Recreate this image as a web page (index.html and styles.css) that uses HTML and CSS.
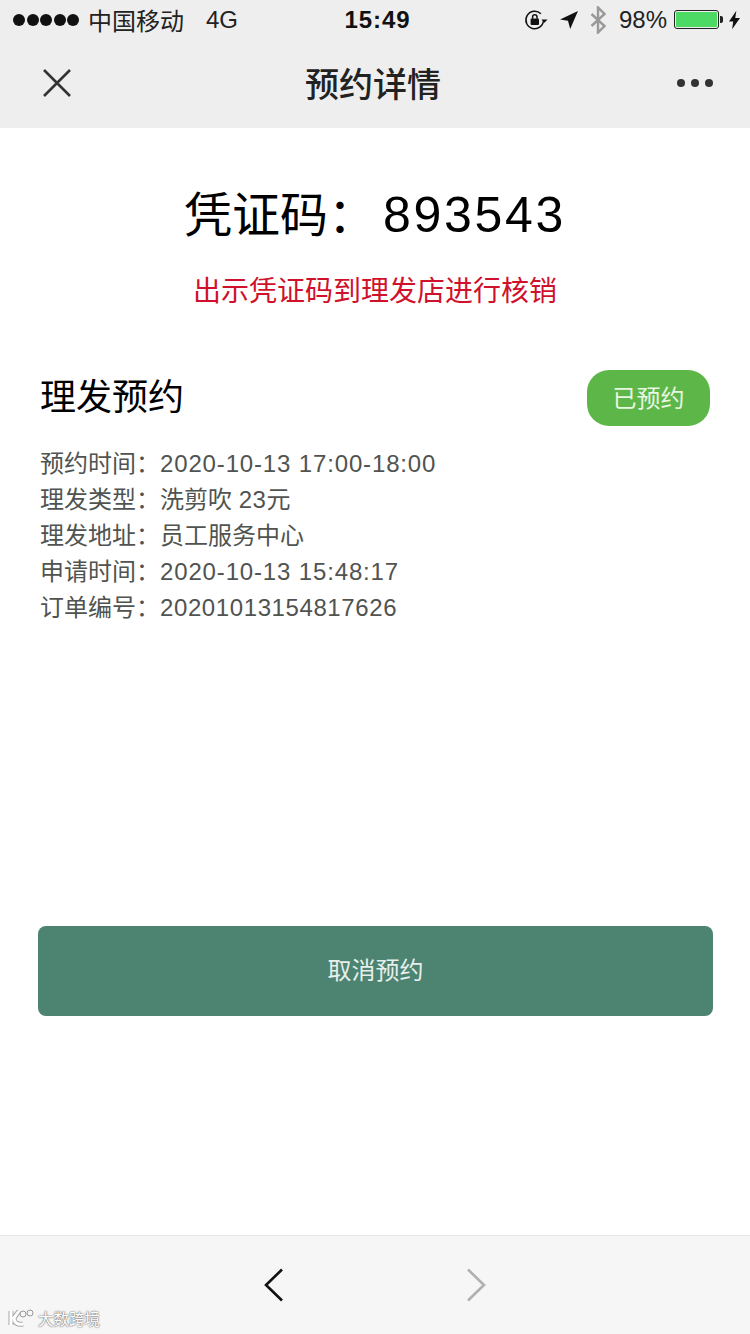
FILE: index.html
```html
<!DOCTYPE html>
<html lang="zh-CN">
  <head>
    <meta charset="utf-8"/>
    <title>预约详情</title>
    <link rel="stylesheet" href="styles.css">
  </head>

  <body>
    <div class="phone">
      <header class="top">
        <div class="status">
          <div class="status-left">
            <span class="signal"><i></i><i></i><i></i><i></i><i></i></span>
            <span class="carrier">中国移动</span>
            <span class="net">4G</span>
          </div>
          <div class="clock">15:49</div>
          <div class="status-right">
            <svg class="ic-lock" width="24" height="24" viewBox="0 0 24 24">
              <path d="M19.500 12a8.800 8.800 0 1 1-2.600-6.300" fill="none" stroke="#111" stroke-width="1.500"/>
              <path d="M17.500 11.500h6l-3 3.200z" fill="#111"/>
              <rect x="6.600" y="10.600" width="8.400" height="6.400" rx="1" fill="#111"/>
              <path d="M8.600 10.800V9a2.200 2.200 0 0 1 4.400 0v1.800" fill="none" stroke="#111" stroke-width="1.500"/>
            </svg>
            <svg class="ic-loc" width="18" height="18" viewBox="0 0 18 18">
              <path d="M18 0 0 8.500l8 1.300L10.200 18z" fill="#111"/>
            </svg>
            <svg class="ic-bt" width="16" height="28" viewBox="0 0 16 28">
              <path d="M1.500 8l13 12-6.500 6.500V1.500L14.500 8l-13 12" fill="none" stroke="#999" stroke-width="2.400"/>
            </svg>
            <span class="percent">98%</span>
            <span class="battery"><span class="battery-fill"></span></span>
            <span class="battery-tip"></span>
            <svg class="ic-bolt" width="11" height="20" viewBox="0 0 12 20">
              <path d="M8 0 0 11.500h4.600L3.400 20 12 7.800H6.800z" fill="#111"/>
            </svg>
          </div>
        </div>
        <div class="nav">
          <svg width="32" height="32" viewBox="0 0 32 32">
            <path d="M3 3l26 26M29 3L3 29" stroke="#333" stroke-width="2.600" fill="none"/>
          </svg>
          <h1 class="nav-title">预约详情</h1>
          <span class="dots"><i></i><i></i><i></i></span>
        </div>
      </header>

      <main class="content">
        <div class="code">凭证码：<span class="code-num">893543</span></div>
        <p class="hint">出示凭证码到理发店进行核销</p>

        <div class="card-head">
          <h2 class="card-title">理发预约</h2>
          <span class="tag">已预约</span>
        </div>
        <ul class="info">
          <li>预约时间：<span class="stamp">2020-10-13 17:00-18:00</span></li>
          <li>理发类型：洗剪吹 <span class="num">23</span>元</li>
          <li>理发地址：员工服务中心</li>
          <li>申请时间：<span class="stamp">2020-10-13 15:48:17</span></li>
          <li>订单编号：<span class="num">20201013154817626</span></li>
        </ul>

        <button class="cancel">取消预约</button>
      </main>

      <footer class="bottom">
        <svg width="20" height="34" viewBox="0 0 20 34">
          <path d="M18 1.500 2 17l16 15.500" fill="none" stroke="#111" stroke-width="2.600"/>
        </svg>
        <svg width="20" height="34" viewBox="0 0 20 34">
          <path d="M2 1.500 18 17 2 32.500" fill="none" stroke="#b0b0b0" stroke-width="2.600"/>
        </svg>
      </footer>

      <div class="mark">
        <svg width="28" height="20" viewBox="0 0 28 20">
          <path d="M4 3v14M12 3 7 10c0 5 4 7 9 6" fill="none" stroke="#a8a8a8" stroke-width="5"/>
          <path d="M4 3v14M12 3 7 10c0 5 4 7 9 6" fill="none" stroke="#fff" stroke-width="3"/>
          <circle cx="16" cy="6" r="3" fill="none" stroke="#999"/>
          <circle cx="23" cy="5" r="3" fill="none" stroke="#999"/>
        </svg>
        <span>大数跨境</span>
      </div>
    </div>
  </body>
</html>
```

FILE: styles.css
```css
* {
  box-sizing: border-box;
}

body {
  margin: 0;
  background: #fff;
  color: #000;
  font-family: "Liberation Sans", "Noto Sans CJK SC", sans-serif;
}

h1, h2, p, ul {
  margin: 0;
  padding: 0;
}

.phone {
  position: relative;
  width: 750px;
  height: 1334px;
  display: flex;
  flex-direction: column;
  overflow: hidden;
}

/* top bars */
.top {
  height: 128px;
  background: #eeeeee;
  flex: none;
}

.status {
  height: 42px;
  padding: 0 10px 3px 13px;
  display: grid;
  grid-template-columns: 1fr auto 1fr;
  align-items: center;
  font-size: 24px;
  color: #222;
}

.status-left {
  display: flex;
  align-items: center;
}

.signal {
  display: flex;
  gap: 1.500px;
  margin-right: 9px;
}

.signal i {
  width: 12px;
  height: 12px;
  border-radius: 50%;
  background: #111;
}

.net {
  margin-left: 22px;
}

.clock {
  margin-left: 2px;
  font-size: 24px;
  font-weight: 700;
  letter-spacing: .9px;
  color: #111;
}

.status-right {
  display: flex;
  align-items: center;
  justify-content: flex-end;
}

.ic-loc {
  margin-left: 12px;
}

.ic-bt {
  margin-left: 12px;
}

.percent {
  margin-left: 13px;
  font-size: 24px;
}

.battery {
  margin-left: 7px;
  width: 45px;
  height: 19px;
  padding: 1px;
  border: 1px solid #222;
  border-radius: 3px;
}

.battery-fill {
  display: block;
  height: 100%;
  background: #4cd964;
  border-radius: 1px;
}

.battery-tip {
  width: 3px;
  height: 7px;
  margin-left: 1px;
  background: #222;
  border-radius: 0 2px 2px 0;
}

.ic-bolt {
  margin-left: 6px;
}

.nav {
  height: 85px;
  padding: 0 37px 4px 41px;
  display: flex;
  align-items: center;
  justify-content: space-between;
}

.nav-title {
  margin-right: 4px;
  font-size: 34px;
  font-weight: 500;
  color: #222;
}

.dots {
  display: flex;
  gap: 6px;
}

.dots i {
  width: 8px;
  height: 8px;
  border-radius: 50%;
  background: #333;
}

/* main */
.content {
  flex: 1;
  padding: 0 40px;
  display: flex;
  flex-direction: column;
}

.code {
  margin-top: 51px;
  height: 72px;
  font-size: 48px;
  line-height: 72px;
  text-align: center;
}

.code-num {
  margin-left: 7px;
  font-size: 50px;
  letter-spacing: 2.700px;
}

.hint {
  margin-top: 21px;
  font-size: 28px;
  line-height: 40px;
  color: #d0112b;
  text-align: center;
}

.card-head {
  margin-top: 58px;
  display: flex;
  align-items: center;
  justify-content: space-between;
}

.card-title {
  font-size: 36px;
  font-weight: 400;
  line-height: 56px;
}

.tag {
  width: 123px;
  height: 56px;
  padding-bottom: 3px;
  border-radius: 22px;
  background: #5cb748;
  color: #e8f6e2;
  font-size: 24px;
  display: flex;
  align-items: center;
  justify-content: center;
}

.info {
  list-style: none;
  margin-top: 20px;
  font-size: 24px;
  line-height: 36px;
  color: #505350;
}

.info li {
  height: 36px;
}

.num {
  letter-spacing: .6px;
}

.stamp {
  letter-spacing: .85px;
}

.cancel {
  margin: 300px -3px 0 -2px;
  height: 90px;
  padding: 0 0 5px;
  border: none;
  border-radius: 8px;
  background: #4c8371;
  color: #e6efeb;
  font-family: inherit;
  font-size: 24px;
}

/* bottom bar */
.bottom {
  height: 99px;
  flex: none;
  padding-left: 264px;
  border-top: 1px solid #e6e6e6;
  background: #f6f6f6;
  display: flex;
  align-items: center;
  gap: 182px;
}

/* watermark sits over the bottom bar */
.mark {
  position: absolute;
  left: 7px;
  bottom: 5px;
  display: flex;
  align-items: center;
  gap: 3px;
  font-size: 15.500px;
  color: #fff;
  text-shadow: 0 0 2px #666, 0 0 1px #666;
}
```
